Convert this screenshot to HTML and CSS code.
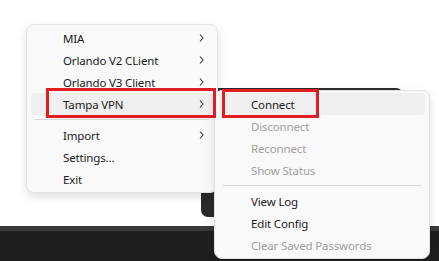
FILE: index.html
```html
<!DOCTYPE html>
<html lang="en">
<head>
  <meta charset="UTF-8">
  <title>Tray menu</title>
  <link rel="stylesheet" href="styles.css">
</head>
<body>
  <div class="desktop">
    <div class="window"></div>

    <div class="menu main-menu">
      <div class="item">MIA <svg class="chev" width="5" height="8" viewBox="0 0 5 8"><path d="M1 0.5l3 3.5-3 3.5"/></svg></div>
      <div class="item">Orlando V2 CLient <svg class="chev" width="5" height="8" viewBox="0 0 5 8"><path d="M1 0.5l3 3.5-3 3.5"/></svg></div>
      <div class="item">Orlando V3 Client <svg class="chev" width="5" height="8" viewBox="0 0 5 8"><path d="M1 0.5l3 3.5-3 3.5"/></svg></div>
      <div class="item hover">Tampa VPN <svg class="chev" width="5" height="8" viewBox="0 0 5 8"><path d="M1 0.5l3 3.5-3 3.5"/></svg></div>
      <div class="sep"></div>
      <div class="item">Import <svg class="chev" width="5" height="8" viewBox="0 0 5 8"><path d="M1 0.5l3 3.5-3 3.5"/></svg></div>
      <div class="item">Settings...</div>
      <div class="item">Exit</div>
    </div>

    <div class="menu sub-menu">
      <div class="item hover">Connect</div>
      <div class="item off">Disconnect</div>
      <div class="item off">Reconnect</div>
      <div class="item off">Show Status</div>
      <div class="sep"></div>
      <div class="item">View Log</div>
      <div class="item">Edit Config</div>
      <div class="item off">Clear Saved Passwords</div>
    </div>

    <div class="mark mark-tampa"></div>
    <div class="mark mark-connect"></div>
  </div>
  <div class="taskbar"></div>
</body>
</html>
```

FILE: styles.css
```css
* { margin: 0; padding: 0; box-sizing: border-box; }
html, body {
  width: 439px;
  height: 261px;
  overflow: hidden;
  background: #fff;
  font-family: "Noto Sans", "Open Sans", sans-serif;
  font-size: 11.5px;
  letter-spacing: -0.15px;
  color: #1a1a1a;
}

.desktop {
  position: relative;
  height: 226px;
  z-index: 1;
}

.window {
  position: absolute;
  left: 201px;
  top: 88px;
  width: 202px;
  height: 129px;
  background: #2b2b2b;
  border-radius: 7px;
}

.menu {
  position: absolute;
  display: flex;
  flex-direction: column;
  padding: 2px 0;
  background: #f9f9f9;
  border: 1px solid #e3e3e3;
  border-radius: 8px;
  box-shadow: 0 4px 10px rgba(0, 0, 0, 0.13);
}

.main-menu { left: 26px; top: 24px; width: 192px; }
.sub-menu { left: 214px; top: 90px; width: 216px; }

.item {
  display: flex;
  align-items: center;
  justify-content: space-between;
  height: 22px;
  margin: 0 4px;
  padding: 0 9px 0 32px;
  border-radius: 4px;
  white-space: nowrap;
}

.item.hover { background: #efefef; }
.item.off { color: #a0a0a0; }

.chev {
  fill: none;
  stroke: #3a3a3a;
  stroke-width: 1.1;
}

.sep {
  height: 1px;
  margin: 4px 8px 4px 8px;
  background: #d8d8d8;
}

.mark {
  position: absolute;
  border: 3px solid #e21c23;
}

.mark-tampa { left: 46px; top: 88px; width: 170px; height: 30px; }
.mark-connect { left: 222px; top: 89px; width: 97px; height: 29px; }

.taskbar {
  height: 35px;
  background: #1f1f1f;
  border-top: 5px solid #3a3a3a;
}
```
